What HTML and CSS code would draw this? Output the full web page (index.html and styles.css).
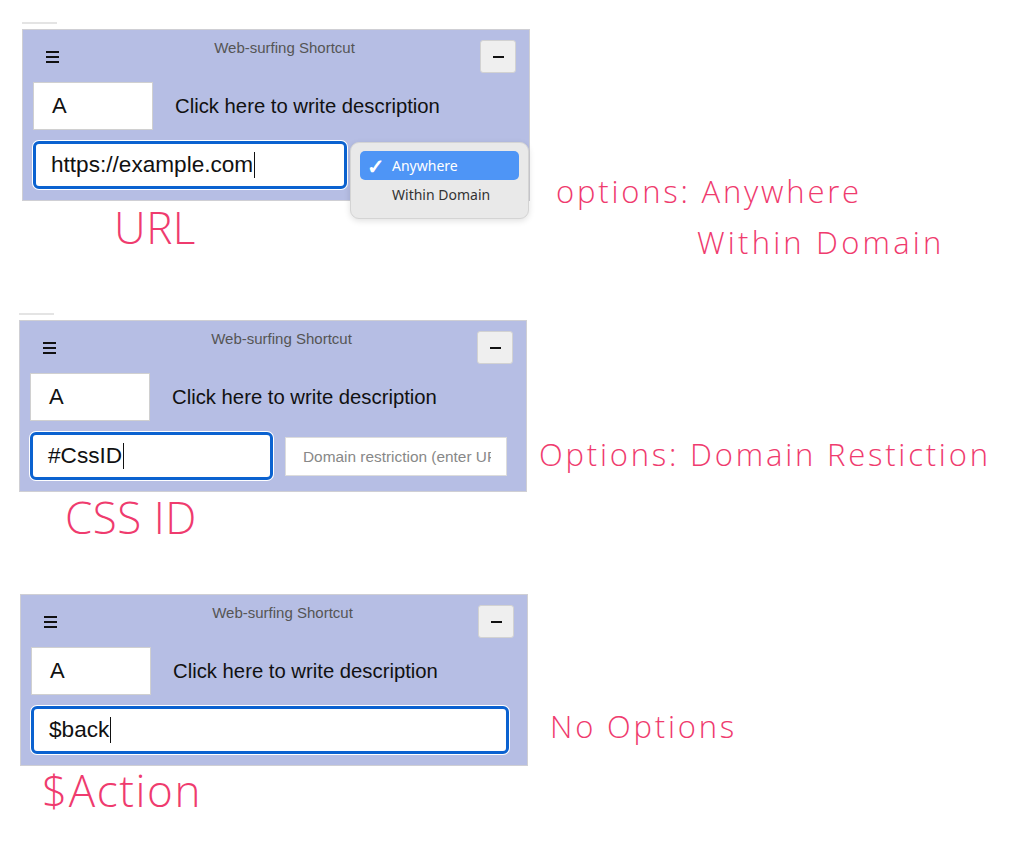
FILE: index.html
```html
<!DOCTYPE html>
<html lang="en">
<head>
  <meta charset="UTF-8" />
  <title>Web-surfing Shortcut - input types</title>
  <link rel="stylesheet" href="styles.css">
</head>
<body>
  <!-- URL -->
  <section class="shot shot-url">
    <div class="left">
      <div class="tab-line"></div>
      <div class="panel">
        <div class="panel-head">
          <span class="burger"><i></i><i></i><i></i></span>
          <span class="title">Web-surfing Shortcut</span>
          <span class="min-btn"><i></i></span>
        </div>
        <div class="key-row">
          <div class="key-box">A</div>
          <div class="desc">Click here to write description</div>
        </div>
        <div class="target-row">
          <div class="target w-url">https://example.com<span class="caret"></span></div>
        </div>
        <div class="menu">
          <div class="menu-item on"><span class="tick">&#10003;</span>Anywhere</div>
          <div class="menu-item">Within Domain</div>
        </div>
      </div>
      <div class="label l-url">URL</div>
    </div>
    <div class="notes n-url">
      <div>options: Anywhere</div>
      <div class="indent">Within Domain</div>
    </div>
  </section>

  <!-- CSS ID -->
  <section class="shot shot-css">
    <div class="left">
      <div class="tab-line"></div>
      <div class="panel">
        <div class="panel-head">
          <span class="burger"><i></i><i></i><i></i></span>
          <span class="title">Web-surfing Shortcut</span>
          <span class="min-btn"><i></i></span>
        </div>
        <div class="key-row">
          <div class="key-box">A</div>
          <div class="desc">Click here to write description</div>
        </div>
        <div class="target-row">
          <div class="target w-css">#CssID<span class="caret"></span></div>
          <div class="domain"><span class="placeholder">Domain restriction (enter URL)</span></div>
        </div>
      </div>
      <div class="label l-css">CSS ID</div>
    </div>
    <div class="notes n-css">
      <div>Options: Domain Restiction</div>
    </div>
  </section>

  <!-- $Action -->
  <section class="shot shot-act">
    <div class="left">
      <div class="panel">
        <div class="panel-head">
          <span class="burger"><i></i><i></i><i></i></span>
          <span class="title">Web-surfing Shortcut</span>
          <span class="min-btn"><i></i></span>
        </div>
        <div class="key-row">
          <div class="key-box">A</div>
          <div class="desc">Click here to write description</div>
        </div>
        <div class="target-row">
          <div class="target w-act">$back<span class="caret"></span></div>
        </div>
      </div>
      <div class="label l-act">$Action</div>
    </div>
    <div class="notes n-act">
      <div>No Options</div>
    </div>
  </section>
</body>
</html>
```

FILE: styles.css
```css
:root {
  --panel-bg: #b6bee4;
  --panel-border: #cfcfd4;
  --focus: #0b62d0;
  --pink: #ef3b6e;
  --ui-font: 'Liberation Sans', Arial, sans-serif;
  --note-font: 'Open Sans', 'Noto Sans CJK KR', sans-serif;
}
* { box-sizing: border-box; margin: 0; padding: 0; }
body {
  background: #fff;
  font-family: var(--ui-font);
  color: #111;
  width: 1024px;
  height: 842px;
  overflow: hidden;
}

.shot {
  display: flex;
  align-items: flex-start;
}
.shot-url { height: 313px; padding: 22px 0 0 22px; }
.shot-css { height: 280px; padding: 0 0 0 19px; }
.shot-act { padding: 1px 0 0 20px; }

.tab-line {
  width: 35px;
  height: 2px;
  background: #e4e4e4;
  margin-bottom: 5px;
}

/* panel */
.panel {
  position: relative;
  width: 508px;
  height: 172px;
  background: var(--panel-bg);
  border: 1px solid var(--panel-border);
  padding: 10px 10px 0 10px;
}
.panel-head {
  display: flex;
  align-items: flex-start;
  height: 33px;
}
.burger {
  display: flex;
  flex-direction: column;
  gap: 3px;
  width: 13px;
  margin: 11px 0 0 13px;
}
.burger i {
  display: block;
  height: 2px;
  background: #111;
}
.title {
  flex: 1;
  text-align: center;
  font-size: 15px;
  color: #555;
  padding-left: 30px;
  line-height: 15px;
  margin-top: 0;
}
.min-btn {
  width: 36px;
  height: 33px;
  background: #efefef;
  border: 1px solid #d2d2d2;
  border-radius: 3px;
  display: flex;
  align-items: center;
  justify-content: center;
  margin-right: 3px;
}
.min-btn i {
  display: block;
  width: 11px;
  height: 2px;
  background: #111;
}

.key-row {
  display: flex;
  align-items: center;
  margin-top: 9px;
  gap: 22px;
}
.key-box {
  width: 120px;
  height: 48px;
  background: #fff;
  border: 1px solid #d0d0d0;
  font-size: 22px;
  line-height: 46px;
  padding-left: 18px;
}
.desc {
  font-size: 20.3px;
}

.target-row {
  display: flex;
  align-items: center;
  gap: 12px;
  margin-top: 11px;
}
.target {
  height: 48px;
  background: #fff;
  border: 3px solid var(--focus);
  border-radius: 6px;
  box-shadow: 0 0 0 1px #fff;
  font-size: 22.6px;
  line-height: 42px;
  padding-left: 15px;
  white-space: nowrap;
}
.w-url { width: 314px; }
.w-css { width: 243px; }
.w-act { width: 478px; }
.caret {
  display: inline-block;
  width: 1px;
  height: 26px;
  background: #111;
  vertical-align: -6px;
  margin-left: 1px;
}
.domain {
  width: 222px;
  height: 39px;
  background: #fff;
  border: 1px solid #dcdcdc;
  padding-left: 17px;
}
.placeholder {
  display: block;
  width: 188px;
  overflow: hidden;
  white-space: nowrap;
  font-size: 15.4px;
  color: #888;
  line-height: 37px;
}

/* dropdown menu over panel 1 */
.menu {
  position: absolute;
  left: 327px;
  top: 112px;
  width: 179px;
  height: 77px;
  background: #e9e9e9;
  border: 1px solid #d4d4d4;
  border-radius: 9px;
  box-shadow: 0 2px 6px rgba(0, 0, 0, 0.12);
  padding: 8px 9px;
  font-family: 'Noto Sans', 'Liberation Sans', sans-serif;
  font-size: 14px;
  color: #333;
}
.menu-item {
  height: 29px;
  line-height: 29px;
  padding-left: 32px;
  border-radius: 5px;
  position: relative;
}
.menu-item.on {
  background: #4e95f6;
  color: #fff;
}
.tick {
  position: absolute;
  left: 7px;
  top: 1px;
  font-size: 21px;
  font-weight: 700;
}

/* pink annotations */
.label, .notes {
  font-family: var(--note-font);
  font-weight: 300;
  color: var(--pink);
  line-height: 1;
}
.label { font-size: 44px; letter-spacing: 0.5px; }
.l-url { margin: 4px 0 0 92px; }
.l-css { margin: 3px 0 0 46px; }
.l-act { margin: 2px 0 0 22px; letter-spacing: 1.6px; }

.notes { font-size: 31px; letter-spacing: 2.8px; }
.n-url { margin: 154px 0 0 26px; }
.n-url .indent { margin: 20px 0 0 141px; letter-spacing: 3.2px; }
.n-css { margin: 126px 0 0 12px; }
.n-act { margin: 117px 0 0 22px; }
```
